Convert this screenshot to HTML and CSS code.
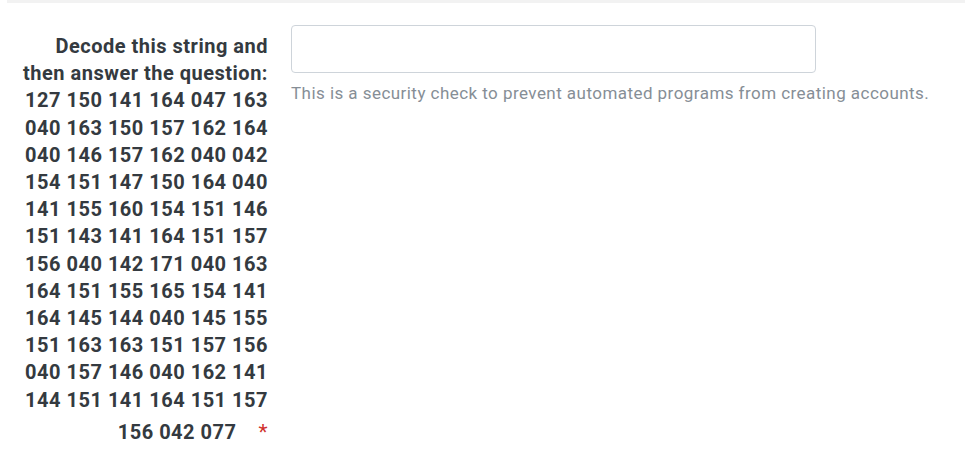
FILE: index.html
```html
<!DOCTYPE html>
<html>
<head>
<meta charset="utf-8">
<link rel="stylesheet" href="styles.css">
</head>
<body>
<div class="topbar"></div>
<div class="row">
  <label class="label" for="q">Decode this string and then answer the question: 127 150 141 164 047 163 040 163 150 157 162 164 040 146 157 162 040 042 154 151 147 150 164 040 141 155 160 154 151 146 151 143 141 164 151 157 156 040 142 171 040 163 164 151 155 165 154 141 164 145 144 040 145 155 151 163 163 151 157 156 040 157 146 040 162 141 144 151 141 164 151 157 156 042 077<span class="req">*</span></label>
  <div class="field">
    <input id="q" class="input" type="text">
    <p class="help">This is a security check to prevent automated programs from creating accounts.</p>
  </div>
</div>
</body>
</html>
```
FILE: styles.css
```css
html, body { margin: 0; padding: 0; background: #fff; }
body { font-family: Roboto, "Noto Sans", sans-serif; }
.topbar { margin-left: 7px; height: 3px; background: #f2f2f2; }
.row { display: flex; align-items: flex-start; padding-top: 22px; }
.label {
  box-sizing: border-box;
  width: 250px;
  margin-left: 18px;
  text-align: right;
  font-weight: 700;
  font-size: 20px;
  letter-spacing: 0.5px;
  line-height: 27.2px;
  color: #343a40;
  padding-top: 8px;
}
.req { color: #d0312d; font-weight: 400; font-size: 21px; margin-left: 22px; line-height: 37.2px; }
.field { margin-left: 23px; }
.input {
  display: block;
  box-sizing: border-box;
  width: 525px;
  height: 48px;
  border: 1px solid #ced4da;
  border-radius: 4px;
  margin: 0;
}
.help { margin: 8px 0 0; font-size: 17px; letter-spacing: 0.45px; line-height: 24px; color: #868e96; }
```
